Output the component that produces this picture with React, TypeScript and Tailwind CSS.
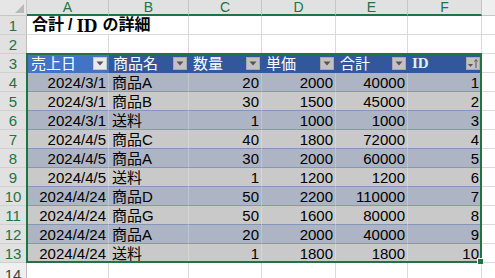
import clsx from 'clsx'

const FONT = { fontFamily: '"Liberation Sans", "Noto Sans CJK JP", sans-serif' }
const SERIF = { fontFamily: '"Liberation Serif", serif' }

// column widths incl. right gridline: A..F
const COL_W = ['w-[82px]', 'w-[80px]', 'w-[73px]', 'w-[74px]', 'w-[72px]', 'w-[74px]']
const LETTERS = ['A', 'B', 'C', 'D', 'E', 'F']

type Row = [string, string, number, number, number, number]

const rows: Row[] = [
  ['2024/3/1', '商品A', 20, 2000, 40000, 1],
  ['2024/3/1', '商品B', 30, 1500, 45000, 2],
  ['2024/3/1', '送料', 1, 1000, 1000, 3],
  ['2024/4/5', '商品C', 40, 1800, 72000, 4],
  ['2024/4/5', '商品A', 30, 2000, 60000, 5],
  ['2024/4/5', '送料', 1, 1200, 1200, 6],
  ['2024/4/24', '商品D', 50, 2200, 110000, 7],
  ['2024/4/24', '商品G', 50, 1600, 80000, 8],
  ['2024/4/24', '商品A', 20, 2000, 40000, 9],
  ['2024/4/24', '送料', 1, 1800, 1800, 10],
]

function RowHead({ n, sel = true }: { n: number; sel?: boolean }) {
  return (
    <div
      className={clsx(
        'w-[27px] shrink-0 h-full flex items-center justify-center border-r border-b border-r-[#bcbcbc] border-b-[#d0d0d0] text-[15px] leading-none',
        sel ? 'bg-[#e1e1e1] text-[#217346]' : 'bg-[#efefef] text-[#444] items-start pt-[4px]'
      )}
    >
      {n}
    </div>
  )
}

function DropBtn({ active = false, sort = false }: { active?: boolean; sort?: boolean }) {
  return (
    <div
      className={clsx(
        'absolute right-[2px] top-[3px] w-[14px] h-[13px] border flex items-center justify-center',
        active ? 'bg-[#e9e9e9] border-[#c8c8c8]' : 'bg-[#c2c2c2] border-[#a9a9a9]'
      )}
    >
      {sort ? (
        <svg width="12" height="11" viewBox="0 0 12 11">
          <path d="M1 6h5l-2.5 3z" fill="#555" />
          <path d="M9 10V2M7.5 3.5L9 1.5l1.5 2" stroke="#555" strokeWidth="1" fill="none" />
        </svg>
      ) : (
        <svg width="8" height="5" viewBox="0 0 8 5">
          <path d="M0.5 0.5h7l-3.5 4z" fill="#555" />
        </svg>
      )}
    </div>
  )
}

function GridCell({ w }: { w: string }) {
  return <div className={clsx(w, 'shrink-0 h-full border-b border-r border-[#dadada]')} />
}

function BlankRow({ n, sel = true }: { n: number; sel?: boolean }) {
  return (
    <div className="flex h-[19px]">
      <RowHead n={n} sel={sel} />
      {COL_W.map((w) => (
        <GridCell key={w} w={w} />
      ))}
      <div className="flex-1 h-full border-b border-[#dadada]" />
    </div>
  )
}

const HEADS = ['売上日', '商品名', '数量', '単価', '合計']

export default function App() {
  return (
    <div className="relative w-[495px] h-[278px] overflow-hidden bg-white text-black" style={FONT}>
      {/* column headers */}
      <div className="flex h-[16px]">
        <div className="w-[27px] shrink-0 h-full bg-[#e6e6e6] border-r border-b border-[#c6c6c6] relative">
          <svg className="absolute right-[2px] bottom-[2px]" width="9" height="9" viewBox="0 0 9 9">
            <path d="M9 0V9H0z" fill="#b9b9b9" />
          </svg>
        </div>
        {LETTERS.map((l, i) => (
          <div
            key={l}
            className={clsx(
              COL_W[i],
              'shrink-0 h-full bg-[#e1e1e1] border-r border-r-[#c6c6c6] border-b-2 border-b-[#217346] flex items-center justify-center text-[14px] leading-none text-[#217346]'
            )}
          >
            {l}
          </div>
        ))}
        <div className="flex-1 h-full bg-[#efefef] border-b border-[#c6c6c6]" />
      </div>

      {/* row 1: title */}
      <div className="flex h-[19px]">
        <RowHead n={1} />
        <div className="w-[82px] shrink-0 h-full border-b border-[#dadada] relative">
          <div className="absolute left-[5px] top-0 h-full flex items-center whitespace-nowrap text-[16px] font-bold leading-none">
            <span>合計</span>
            <span className="mx-[4px]">/</span>
            <span className="text-[19px] mr-[5px]" style={SERIF}>ID</span>
            <span>の詳細</span>
          </div>
        </div>
        {COL_W.slice(1).map((w) => (
          <GridCell key={w} w={w} />
        ))}
        <div className="flex-1 h-full border-b border-[#dadada]" />
      </div>

      <BlankRow n={2} />

      {/* row 3: table header */}
      <div className="flex h-[19px]">
        <RowHead n={3} />
        {HEADS.map((h, i) => (
          <div
            key={h}
            className={clsx(
              COL_W[i],
              'shrink-0 h-full relative flex items-center pl-[4px] text-[15px] leading-none text-white',
              i === 0 ? 'bg-[#4472c4]' : 'bg-[#33579b]'
            )}
          >
            {h}
            <DropBtn active={i === 0} />
          </div>
        ))}
        <div className="w-[74px] shrink-0 h-full relative flex items-center pl-[4px] text-[15px] leading-none font-bold text-[#e8ecf5] bg-[#33579b]">
          <span style={SERIF}>ID</span>
          <DropBtn sort />
        </div>
        <div className="flex-1 h-full border-b border-[#dadada]" />
      </div>

      {/* table body */}
      {rows.map((r, i) => {
        const band = i % 2 === 0 ? 'bg-[#adb4c3] border-r-[#bec4d0]' : 'bg-[#c9c9c9] border-r-[#d6d6d6]'
        return (
          <div key={i} className="flex h-[19px]">
            <RowHead n={i + 4} />
            {r.map((v, j) => (
              <div
                key={j}
                className={clsx(
                  COL_W[j],
                  band,
                  'shrink-0 h-full border-r border-b border-b-[#8496ba] flex items-center text-[15px] leading-none whitespace-nowrap',
                  j === 1 ? 'justify-start pl-[3px]' : 'justify-end pr-[2px]'
                )}
              >
                {v}
              </div>
            ))}
            <div className="flex-1 h-full border-b border-[#dadada]" />
          </div>
        )
      })}

      <BlankRow n={14} sel={false} />

      {/* selection */}
      <div className="absolute left-[26px] top-[53px] w-[456px] h-[210px] border-2 border-[#217346] pointer-events-none" />
      <div className="absolute left-[477px] top-[258px] w-[7px] h-[7px] bg-[#217346] border border-white pointer-events-none" />
    </div>
  )
}
